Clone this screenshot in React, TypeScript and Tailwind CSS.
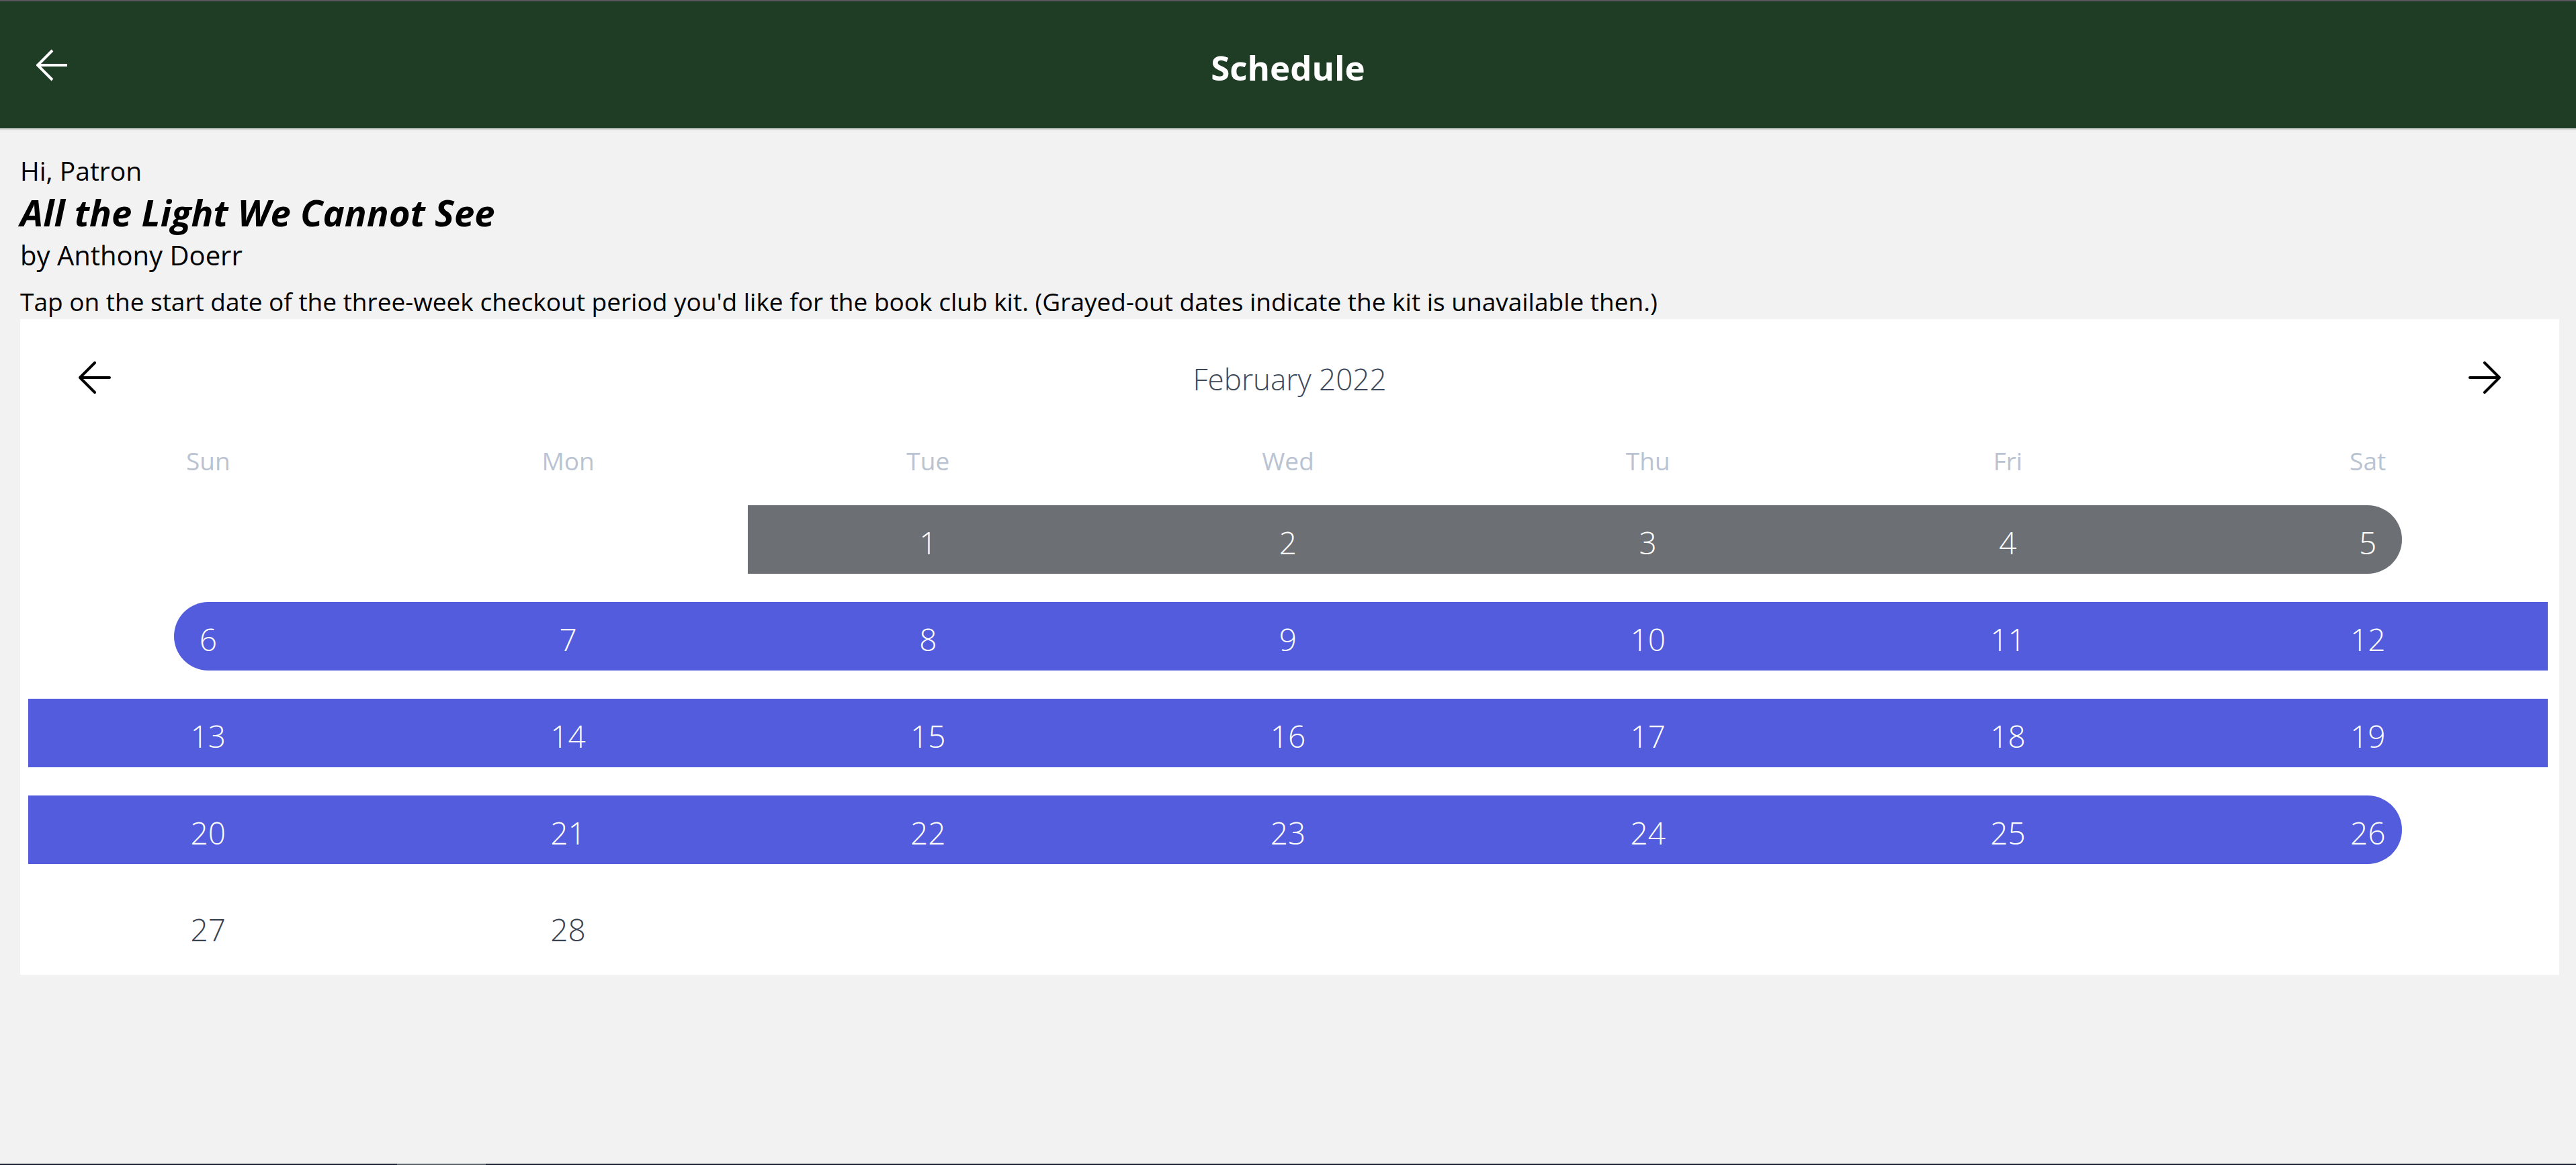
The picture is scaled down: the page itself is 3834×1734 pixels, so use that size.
import React from 'react';

const font = { fontFamily: '"Open Sans", "Noto Sans", sans-serif' };

type Cell = { day: number | null; kind?: 'gray' | 'blue'; cap?: 'start' | 'end' };

// weeks of February 2022 — gray = kit out already, blue = selected three weeks
const weeks: Cell[][] = [
  [{ day: null }, { day: null }, { day: 1, kind: 'gray' }, { day: 2, kind: 'gray' }, { day: 3, kind: 'gray' }, { day: 4, kind: 'gray' }, { day: 5, kind: 'gray', cap: 'end' }],
  [{ day: 6, kind: 'blue', cap: 'start' }, { day: 7, kind: 'blue' }, { day: 8, kind: 'blue' }, { day: 9, kind: 'blue' }, { day: 10, kind: 'blue' }, { day: 11, kind: 'blue' }, { day: 12, kind: 'blue' }],
  [13, 14, 15, 16, 17, 18, 19].map((d) => ({ day: d, kind: 'blue' as const })),
  [{ day: 20, kind: 'blue' }, { day: 21, kind: 'blue' }, { day: 22, kind: 'blue' }, { day: 23, kind: 'blue' }, { day: 24, kind: 'blue' }, { day: 25, kind: 'blue' }, { day: 26, kind: 'blue', cap: 'end' }],
  [{ day: 27 }, { day: 28 }, { day: null }, { day: null }, { day: null }, { day: null }, { day: null }],
];

const dayNames = ['Sun', 'Mon', 'Tue', 'Wed', 'Thu', 'Fri', 'Sat'];

function Arrow({ dir, color, width, round }: { dir: 'left' | 'right'; color: string; width: number; round?: boolean }) {
  const d = dir === 'left' ? 'M46 24H2 M24 2 2 24l22 22' : 'M2 24h44 M24 2l22 22-22 22';
  return (
    <svg width="48" height="48" viewBox="0 0 48 48" fill="none">
      <path d={d} stroke={color} strokeWidth={width} strokeLinecap={round ? 'round' : 'butt'} strokeLinejoin={round ? 'round' : 'miter'} />
    </svg>
  );
}

function DayCell({ cell }: { cell: Cell }) {
  if (cell.day === null) return <div className="h-[102px]" />;
  const num = (
    <span className={`text-[46px] font-light leading-none pt-[8px] ${cell.kind ? 'text-white' : 'text-[#3a4250]'}`}>{cell.day}</span>
  );
  if (!cell.kind) {
    return <div className="h-[102px] flex items-center justify-center">{num}</div>;
  }
  const bg = cell.kind === 'gray' ? 'bg-[#6c6f74]' : 'bg-[#525cdc]';

  if (cell.cap === 'start') {
    return (
      <div className="h-[102px] flex">
        <div className="w-[calc(50%-51px)]" />
        <div className={`flex-1 ${bg} rounded-l-full flex items-center`}>
          <div className="w-[102px] flex justify-center">{num}</div>
        </div>
      </div>
    );
  }
  if (cell.cap === 'end') {
    return (
      <div className="h-[102px] flex">
        <div className={`flex-1 ${bg} rounded-r-full flex items-center justify-end`}>
          <div className="w-[102px] flex justify-center">{num}</div>
        </div>
        <div className="w-[calc(50%-51px)]" />
      </div>
    );
  }
  return <div className={`h-[102px] ${bg} flex items-center justify-center`}>{num}</div>;
}

export default function App() {
  return (
    <div className="min-h-[1734px] flex flex-col bg-[#f2f2f2]" style={font}>
      <div className="h-[2px] bg-[#5a5a5e]" />

      {/* top bar */}
      <header className="h-[189px] bg-[#1f3d24] flex items-center px-[54px]">
        <Arrow dir="left" color="#ffffff" width={4} />
        <h1 className="flex-1 text-center text-white text-[51px] font-bold pr-[48px] pt-[7px]">Schedule</h1>
      </header>
      <div className="h-[3px] bg-[#d8d8d8]" />

      <main className="flex-1 pl-[30px] pr-[25px]">
        <div className="pt-[34px] text-black">
          <p className="text-[39px] leading-[52px]">Hi, Patron</p>
          <h2 className="text-[54.5px] font-bold italic leading-[72px]">All the Light We Cannot See</h2>
          <p className="text-[40px] leading-[55px]">by Anthony Doerr</p>
          <p className="text-[37px] leading-[50px] mt-[17px] whitespace-nowrap">
            Tap on the start date of the three-week checkout period you'd like for the book club kit. (Grayed-out dates indicate the kit is unavailable then.)
          </p>
        </div>

        {/* calendar */}
        <section className="bg-white mt-[1px]">
          <div className="h-[174px] px-[87px] flex items-center justify-between">
            <Arrow dir="left" color="#000000" width={4} round />
            <span className="text-[44px] font-light text-[#3d4a5c] pt-[4px]">February 2022</span>
            <Arrow dir="right" color="#000000" width={4} round />
          </div>

          <div className="ml-[12px] mr-[17px]">
            <div className="grid grid-cols-7 h-[82px] items-center">
              {dayNames.map((n) => (
                <div key={n} className="text-center text-[37px] text-[#bac3d1] pb-[8px]">{n}</div>
              ))}
            </div>

            {weeks.map((week, i) => (
              <div key={i} className="grid grid-cols-7 h-[144px] items-center">
                {week.map((cell, j) => (
                  <DayCell key={j} cell={cell} />
                ))}
              </div>
            ))}
          </div>
        </section>
      </main>

      <div className="h-[2px] bg-[#1b2430] flex">
        <div className="ml-[591px] w-[132px] bg-[#5c636b]" />
      </div>
    </div>
  );
}
